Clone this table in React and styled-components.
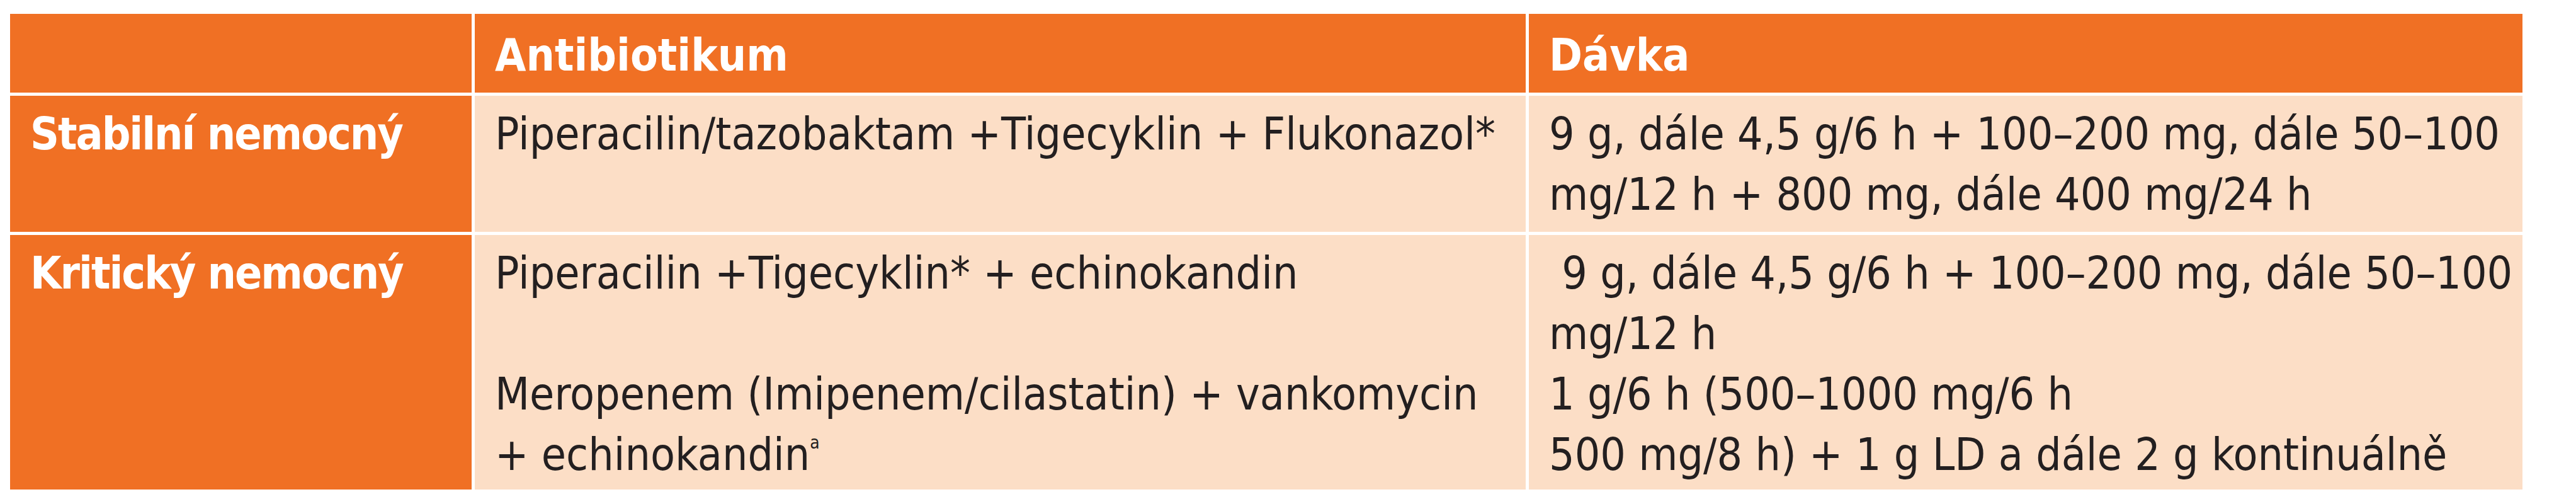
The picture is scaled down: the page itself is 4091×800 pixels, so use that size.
import React from "react";
import styled, { createGlobalStyle } from "styled-components";

const ORANGE = "#f07024";
const PEACH = "#fcdec6";
const INK = "#231f20";

const GlobalStyle = createGlobalStyle`
  html, body {
    margin: 0;
    padding: 0;
    background: #ffffff;
  }
  body {
    font-family: "Liberation Sans Narrow", "DejaVu Sans Condensed", "Roboto Condensed", "Liberation Sans", sans-serif;
    font-stretch: condensed;
  }
`;

const Table = styled.div`
  display: grid;
  grid-template-columns: 733px 1669px 1578px;
  grid-template-rows: 125px 216px 404px;
  column-gap: 5px;
  row-gap: 5px;
  width: 3990px;
  margin: 22px 0 0 16px;
  background: #ffffff;
`;

const Cell = styled.div`
  box-sizing: border-box;
  overflow: hidden;
  white-space: nowrap;
  background: ${(p) => (p.$tone === "body" ? PEACH : ORANGE)};
  color: ${(p) => (p.$tone === "body" ? INK : "#ffffff")};
  font-weight: ${(p) => (p.$tone === "body" ? 400 : 700)};
  font-size: 71px;
  line-height: 96px;
  letter-spacing: ${(p) => (p.$tone === "label" ? "-2px" : "0")};
  padding: ${(p) => (p.$tone === "head" ? "18px 32px 0" : "13px 32px 0")};
`;

const Entry = styled.div`
  min-height: ${(p) => (p.$lines || 1) * 96}px;
`;

const Sup = styled.sup`
  font-size: 28px;
  line-height: 0;
  vertical-align: 34px;
`;

export default function App() {
  return (
    <>
      <GlobalStyle />
      <Table>
        <Cell $tone="head" />
        <Cell $tone="head">Antibiotikum</Cell>
        <Cell $tone="head">Dávka</Cell>

        <Cell $tone="label">Stabilní nemocný</Cell>
        <Cell $tone="body">Piperacilin/tazobaktam +Tigecyklin + Flukonazol*</Cell>
        <Cell $tone="body">
          9 g, dále 4,5 g/6 h + 100–200 mg, dále 50–100
          <br />
          mg/12 h + 800 mg, dále 400 mg/24 h
        </Cell>

        <Cell $tone="label">Kritický nemocný</Cell>
        <Cell $tone="body">
          <Entry $lines={2}>Piperacilin +Tigecyklin* + echinokandin</Entry>
          <Entry $lines={2}>
            Meropenem (Imipenem/cilastatin) + vankomycin
            <br />+ echinokandin<Sup>a</Sup>
          </Entry>
        </Cell>
        <Cell $tone="body">
          <Entry $lines={2}>
            {"\u00a0"}9 g, dále 4,5 g/6 h + 100–200 mg, dále 50–100
            <br />
            mg/12 h
          </Entry>
          <Entry $lines={2}>
            1 g/6 h (500–1000 mg/6 h
            <br />
            500 mg/8 h) + 1 g LD a dále 2 g kontinuálně
          </Entry>
        </Cell>
      </Table>
    </>
  );
}
